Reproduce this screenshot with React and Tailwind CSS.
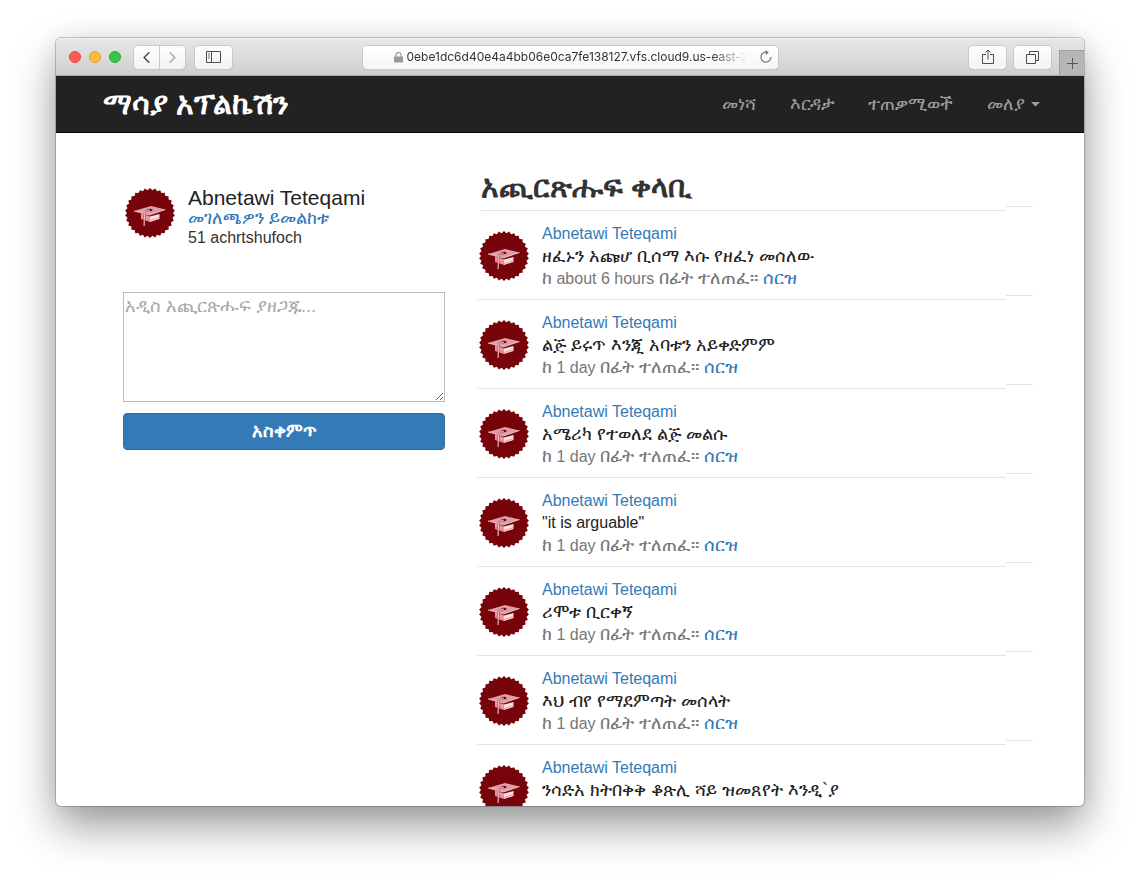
import { ChevronLeft, ChevronRight } from 'lucide-react';

const posts = [
  { text: 'ዘፈኑን አጩሆ ቢሰማ እሱ የዘፈነ መሰለው', ago: 'about 6 hours' },
  { text: 'ልጅ ይሩጥ እንጂ አባቱን አይቀድምም', ago: '1 day' },
  { text: 'አሜሪካ የተወለደ ልጅ መልሱ', ago: '1 day' },
  { text: '"it is arguable"', ago: '1 day', latin: true },
  { text: 'ሪሞቱ ቢርቀኝ', ago: '1 day' },
  { text: 'እህ ብየ የማደምጣት መሰላት', ago: '1 day' },
  { text: 'ንሳድአ ክትበቅቅ ቆጽሊ ሻይ ዝመጸየት እንዲ`ያ', ago: '1 day' },
];

// serrated edge of the seal: 30 teeth, alternating outer and inner radius
const sealPoints = Array.from({ length: 60 }, (_, i) => {
  const r = i % 2 ? 23 : 25;
  const a = (i * Math.PI) / 30;
  return `${(25 + r * Math.sin(a)).toFixed(2)},${(25 - r * Math.cos(a)).toFixed(2)}`;
}).join(' ');

function Avatar() {
  return (
    <svg viewBox="0 0 50 50" className="size-[50px] shrink-0" aria-hidden="true">
      <polygon points={sealPoints} fill="#76040a" />
      <path d="M16 25 25 28.500v5.500L16 31z" fill="#f8919a" />
      <path d="M25 28.500 34.500 26v5L25 34z" fill="#fbdfe2" />
      <path d="M16 29.500 25 32.500l9.500-3" fill="none" stroke="#e0707a" strokeWidth=".6" />
      <path d="M9 23 26 18l14.500 3.500L24.500 27z" fill="#dda0aa" />
      <path d="M9 23 24.500 27 40.500 21.500" fill="none" stroke="#f0cdd2" strokeWidth=".8" />
      <ellipse cx="25" cy="22" rx="2.600" ry="1.200" fill="#76040a" />
      <path d="M25 22q-5 .6-5.500 3.500l-.4 12.500" fill="none" stroke="#76040a" strokeWidth="2" opacity=".6" />
      <path d="M25 22q-5 .6-5.500 3.500l-.4 12.500" fill="none" stroke="#e8b9c0" strokeWidth="1.200" />
    </svg>
  );
}

function ToolButton({ label, className, children }) {
  return (
    <button
      aria-label={label}
      className={`flex h-[23px] items-center justify-center bg-linear-to-b from-[#fdfdfd] to-[#f3f3f3] text-[#4d4d4d] shadow-[0_0_0_1px_#c9c9c9,0_1px_1px_#a0a0a0] ${className}`}
    >
      {children}
    </button>
  );
}

function BrowserBar() {
  return (
    <div className="flex h-[38px] shrink-0 items-center border-t border-t-[#f3f3f3] border-b border-b-[#a9a9a9] bg-linear-to-b from-[#e7e7e7] to-[#cfcfcf] pl-[13px]">
      <div className="flex gap-2">
        <span className="size-3 rounded-full border border-[#e0443e] bg-[#fc5b57]" />
        <span className="size-3 rounded-full border border-[#dfa023] bg-[#fdbc40]" />
        <span className="size-3 rounded-full border border-[#1dad2b] bg-[#34c84a]" />
      </div>
      <div className="ml-[13px] flex gap-px">
        <ToolButton label="Back" className="w-[25px] rounded-l-[4px]">
          <ChevronLeft size={19} strokeWidth={2} />
        </ToolButton>
        <ToolButton label="Forward" className="w-[25px] rounded-r-[4px] text-[#ababab]">
          <ChevronRight size={19} strokeWidth={2} />
        </ToolButton>
      </div>
      <ToolButton label="Sidebar" className="ml-[10px] w-[37px] rounded-[4px]">
        <svg width="15" height="12" viewBox="0 0 15 12" fill="none" stroke="currentColor">
          <path d="M.5.5h14v11H.5zM5.500.5v11" />
          <path d="M2 3h2M2 5h2M2 7h2" strokeWidth=".8" />
        </svg>
      </ToolButton>
      <div className="flex flex-1 justify-center pr-[61px]">
        <div className="flex h-[23px] w-[415px] items-center rounded-[4px] bg-linear-to-b from-white to-[#f6f6f6] pr-[5px] pl-[31px] shadow-[0_0_0_1px_#c9c9c9,0_1px_1px_#a0a0a0]">
          <svg width="9" height="11" viewBox="0 0 9 11">
            <path d="M2 5V3a2.500 2.500 0 0 1 5 0v2" fill="none" stroke="#999" strokeWidth="1.200" />
            <rect y="4.500" width="9" height="6" rx=".5" fill="#999" />
          </svg>
          <input
            aria-label="Address"
            readOnly
            value="0ebe1dc6d40e4a4bb06e0ca7fe138127.vfs.cloud9.us-east-2"
            className="ml-1 min-w-0 flex-1 bg-transparent font-[Inter,sans-serif] text-[12px] text-[#333] outline-none [mask-image:linear-gradient(to_right,black_calc(100%-48px),transparent_calc(100%-12px))]"
          />
          <svg width="14" height="14" viewBox="0 0 14 14" fill="none" stroke="#777" strokeWidth="1.200">
            <path d="M8.500 2.300A5 5 0 1 0 12 7" />
            <path d="M6.500 0 9.800 2.400 6.800 5z" fill="#777" stroke="none" />
          </svg>
        </div>
      </div>
      <ToolButton label="Share" className="w-[37px] rounded-[4px]">
        <svg width="12" height="16" viewBox="0 0 12 16" fill="none" stroke="currentColor">
          <path d="M4 5.500H.5v9h11v-9H8M6 10.500V1M3.500 3.500 6 1l2.500 2.500" />
        </svg>
      </ToolButton>
      <ToolButton label="Tabs" className="ml-2 w-[37px] rounded-[4px]">
        <svg width="13" height="13" viewBox="0 0 13 13" fill="none" stroke="currentColor">
          <path d="M.5 3.500h9v9h-9zM3.500 3V.5h9v9H10" />
        </svg>
      </ToolButton>
      <button aria-label="New tab" className="ml-2 flex h-[25px] w-[25px] items-center justify-center self-end border-t border-l border-[#a0a0a0] bg-[#b6b6b6]">
        <svg width="11" height="11" viewBox="0 0 11 11" stroke="#555">
          <path d="M5.500 0v11M0 5.500h11" />
        </svg>
      </button>
    </div>
  );
}

function Navbar() {
  return (
    <nav className="flex h-[57px] shrink-0 items-center justify-between border-b border-[#080808] bg-[#222] pr-[44px] pl-[47px]">
      <a href="#home" className="text-[30px] leading-none font-bold text-white">ማሳያ አፕልኬሽን</a>
      <div className="flex gap-[34px] text-[18px] text-[#9d9d9d]">
        <a href="#start">መነሻ</a>
        <a href="#help">እርዳታ</a>
        <a href="#users">ተጠቃሚወች</a>
        <a href="#account" className="flex items-center gap-[6px]">
          መለያ
          <svg width="9" height="5" viewBox="0 0 9 5" fill="currentColor"><path d="M0 0h9L4.500 4.500z" /></svg>
        </a>
      </div>
    </nav>
  );
}

function Sidebar() {
  return (
    <aside className="pt-[55px]">
      <section className="flex gap-[13px] pl-[2px]">
        <Avatar />
        <div className="leading-5">
          <h1 className="h-5 text-[21px] text-[#222]">Abnetawi Teteqami</h1>
          <a href="#profile" className="block h-5 text-[18px] text-[#337ab7]">መገለጫዎን ይመልከቱ</a>
          <span className="block h-5 text-[16px] text-[#333]">51 achrtshufoch</span>
        </div>
      </section>
      <form className="mt-[44px]" onSubmit={(e) => e.preventDefault()}>
        <textarea
          aria-label="አዲስ አጪርጽሑፍ"
          placeholder="አዲስ አጪርጽሑፍ ያዘጋጁ..."
          className="block h-[110px] w-full border border-[#bbb] p-px text-[18px] leading-6 placeholder:text-[#a9a9a9]"
        />
        <button className="mt-[11px] h-[37px] w-full rounded-[4px] border border-[#2e6da4] bg-[#337ab7] text-[18px] font-bold text-white">አስቀምጥ</button>
      </form>
    </aside>
  );
}

function Post({ text, ago, latin }) {
  return (
    <li className="flex">
      <div className="flex flex-1 gap-[13px] border-b border-[#e4e4e4] pt-3 pb-[10px] pl-[2px]">
        <div className="pt-2"><Avatar /></div>
        <div className="text-[18px] leading-[22px]">
          <a href="#user" className="block h-[22px] text-[16px] text-[#337ab7]">Abnetawi Teteqami</a>
          <p className={latin ? 'h-[22px] text-[16px] text-[#222]' : 'h-[22px] text-[#222]'}>{text}</p>
          <p className="h-[22px] text-[#777]">
            ከ<span className="text-[16px]"> {ago} </span>በፊት ተለጠፈ።{' '}
            <a href="#delete" className="text-[#337ab7]">ሰርዝ</a>
          </p>
        </div>
      </div>
      <span className="mb-1 w-[27px] border-b border-[#e4e4e4]" />
    </li>
  );
}

export default function App() {
  return (
    <div className="h-screen overflow-hidden bg-white px-14 pt-[38px] pb-[74px] font-['Liberation_Sans',Arial,sans-serif]">
      <div className="flex h-full flex-col overflow-hidden rounded-[5px] bg-white shadow-[0_0_0_1px_rgba(0,0,0,0.2),0_0_24px_rgba(0,0,0,0.06),0_20px_44px_rgba(0,0,0,0.4)]">
        <BrowserBar />
        <Navbar />
        <main className="grid min-h-0 flex-1 grid-cols-[322px_1fr] gap-8 overflow-hidden pr-[51px] pl-[67px]">
          <Sidebar />
          <section>
            <div className="flex pl-1">
              <h2 className="h-[78px] flex-1 border-b border-[#e4e4e4] pt-[36px] text-[30px] leading-9 font-bold text-[#333]">አጪርጽሑፍ ቀላቢ</h2>
              <span className="mb-1 w-[27px] border-b border-[#e4e4e4]" />
            </div>
            <ol>
              {posts.map((post) => (
                <Post key={post.text} {...post} />
              ))}
            </ol>
          </section>
        </main>
      </div>
    </div>
  );
}
